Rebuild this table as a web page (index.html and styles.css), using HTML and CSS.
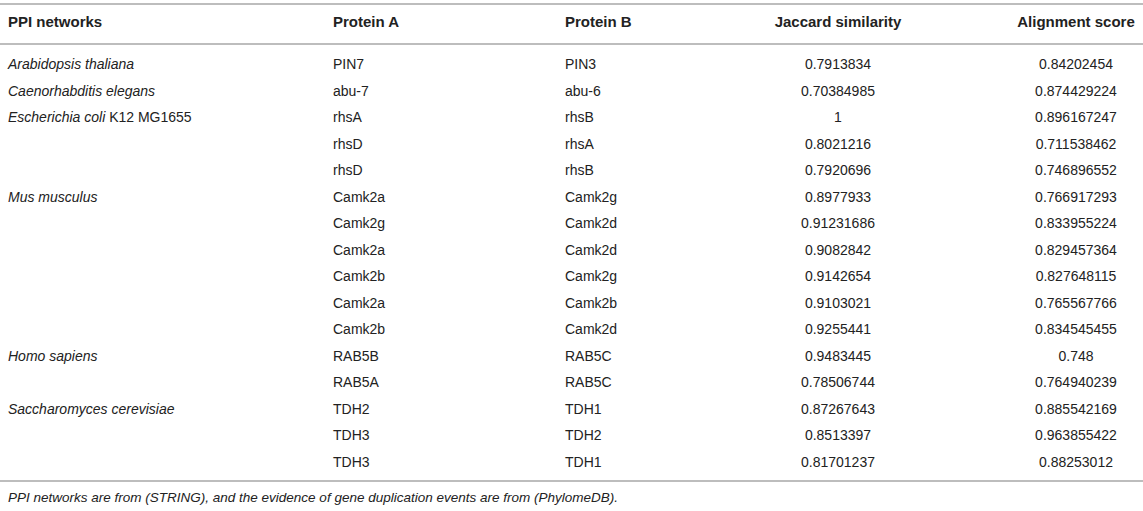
FILE: index.html
```html
<!DOCTYPE html>
<html lang="en">
<head>
    <meta charset="UTF-8">
    <meta name="viewport" content="width=device-width, initial-scale=1.0">
    <title>PPI networks</title>
    <link rel="stylesheet" href="styles.css">
</head>
<body>
    <div class="wrap">
        <table class="data">
            <colgroup>
                <col class="c1">
                <col class="c2">
                <col class="c3">
                <col class="c4">
                <col class="c5">
            </colgroup>
            <thead>
                <tr>
                    <th>PPI networks</th>
                    <th>Protein A</th>
                    <th>Protein B</th>
                    <th class="mid">Jaccard similarity</th>
                    <th class="mid last">Alignment score</th>
                </tr>
            </thead>
            <tbody>
                <tr class="first"><td><i>Arabidopsis thaliana</i></td><td>PIN7</td><td>PIN3</td><td class="mid">0.7913834</td><td class="mid last">0.84202454</td></tr>
                <tr><td><i>Caenorhabditis elegans</i></td><td>abu-7</td><td>abu-6</td><td class="mid">0.70384985</td><td class="mid last">0.874429224</td></tr>
                <tr><td><i>Escherichia coli</i> K12 MG1655</td><td>rhsA</td><td>rhsB</td><td class="mid">1</td><td class="mid last">0.896167247</td></tr>
                <tr><td></td><td>rhsD</td><td>rhsA</td><td class="mid">0.8021216</td><td class="mid last">0.711538462</td></tr>
                <tr><td></td><td>rhsD</td><td>rhsB</td><td class="mid">0.7920696</td><td class="mid last">0.746896552</td></tr>
                <tr><td><i>Mus musculus</i></td><td>Camk2a</td><td>Camk2g</td><td class="mid">0.8977933</td><td class="mid last">0.766917293</td></tr>
                <tr><td></td><td>Camk2g</td><td>Camk2d</td><td class="mid">0.91231686</td><td class="mid last">0.833955224</td></tr>
                <tr><td></td><td>Camk2a</td><td>Camk2d</td><td class="mid">0.9082842</td><td class="mid last">0.829457364</td></tr>
                <tr><td></td><td>Camk2b</td><td>Camk2g</td><td class="mid">0.9142654</td><td class="mid last">0.827648115</td></tr>
                <tr><td></td><td>Camk2a</td><td>Camk2b</td><td class="mid">0.9103021</td><td class="mid last">0.765567766</td></tr>
                <tr><td></td><td>Camk2b</td><td>Camk2d</td><td class="mid">0.9255441</td><td class="mid last">0.834545455</td></tr>
                <tr><td><i>Homo sapiens</i></td><td>RAB5B</td><td>RAB5C</td><td class="mid">0.9483445</td><td class="mid last">0.748</td></tr>
                <tr><td></td><td>RAB5A</td><td>RAB5C</td><td class="mid">0.78506744</td><td class="mid last">0.764940239</td></tr>
                <tr><td><i>Saccharomyces cerevisiae</i></td><td>TDH2</td><td>TDH1</td><td class="mid">0.87267643</td><td class="mid last">0.885542169</td></tr>
                <tr><td></td><td>TDH3</td><td>TDH2</td><td class="mid">0.8513397</td><td class="mid last">0.963855422</td></tr>
                <tr class="end"><td></td><td>TDH3</td><td>TDH1</td><td class="mid">0.81701237</td><td class="mid last">0.88253012</td></tr>
            </tbody>
        </table>
        <p class="note"><i>PPI networks are from (STRING), and the evidence of gene duplication events are from (PhylomeDB).</i></p>
    </div>
</body>
</html>
```

FILE: styles.css
```css
/* Page */
body {
    margin: 0;
    padding: 0;
    background: #fff;
    font-family: "Liberation Sans", Arial, sans-serif;
    font-size: 14px;
    color: #222;
}

.wrap {
    padding-top: 3px;
}

/* Table */
.data {
    width: 1143px;
    border-collapse: collapse;
    table-layout: fixed;
}

.c1 { width: 325px; }
.c2 { width: 232px; }
.c3 { width: 143px; }
.c4 { width: 276px; }
.c5 { width: 167px; }

.data th,
.data td {
    padding: 4px 8px;
    line-height: 18.5px;
    text-align: left;
    white-space: nowrap;
}

.data th {
    font-size: 15px;
    font-weight: bold;
    line-height: 18px;
    padding-top: 8px;
    padding-bottom: 12px;
    border-top: 2px solid #bdbdbd;
    border-bottom: 2px solid #bdbdbd;
}

.data .mid {
    text-align: center;
}

.data .last {
    padding-left: 33px;
    padding-right: 0;
}

.data tr.first td {
    padding-top: 10px;
}

.data tr.end td {
    padding-bottom: 9px;
    border-bottom: 2px solid #bdbdbd;
}

/* Footnote */
.note {
    margin: 0;
    padding: 7px 8px 0;
    font-size: 13.5px;
    line-height: 17px;
}
```
